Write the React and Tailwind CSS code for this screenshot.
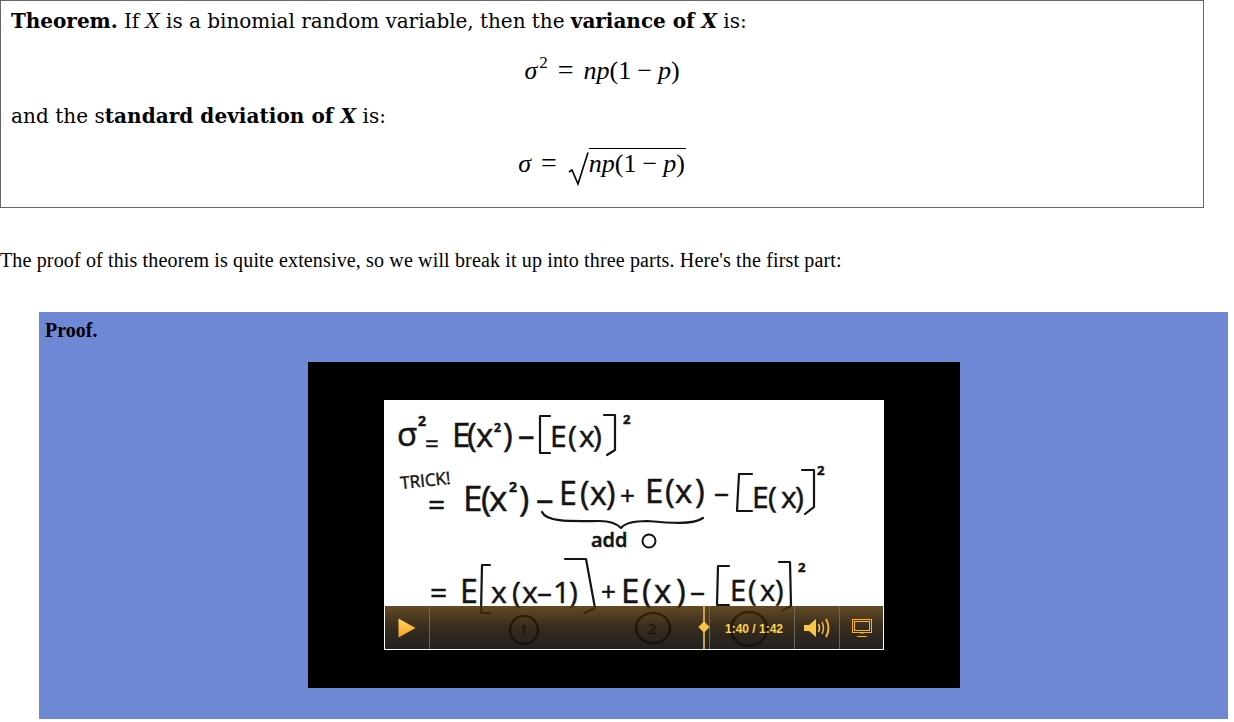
const handFont = { fontFamily: "'Open Sans', sans-serif" };

function Line({ x, y, size = 32, children, fill = "#141414", thick = 0.5, ...rest }) {
  return (
    <text x={x} y={y} fontSize={size} fill={fill} stroke={fill} strokeWidth={thick} style={handFont} {...rest}>
      {children}
    </text>
  );
}

const bracket = {
  fill: "none",
  stroke: "#141414",
  strokeWidth: 2.2,
  strokeLinecap: "round",
  strokeLinejoin: "round",
};

function Board() {
  return (
    <svg viewBox="0 0 498 248" className="block w-full h-full bg-white">
      {/* first line */}
      <Line x="12" y="45" size="33">σ</Line>
      <Line x="33" y="25" size="14" fontWeight="700">2</Line>
      <Line x="40" y="51" size="24">=</Line>
      <Line x="67 82 91" y="46" size="33">E(x</Line>
      <Line x="109" y="31" size="12" fontWeight="700">2</Line>
      <Line x="118 133" y="46" size="33">)–</Line>
      <Line x="165 183 194 208" y="46" size="30">E(x)</Line>
      <Line x="238" y="23" size="13" fontWeight="700">2</Line>
      <path d="M165 15H155V52H165M219 14H230V49L222 54" {...bracket} />

      {/* second line */}
      <Line x="16" y="88" size="17" transform="rotate(-6 16 88)">TRICK!</Line>
      <Line x="43" y="114" size="30">=</Line>
      <Line x="78 96 104" y="110" size="35">E(x</Line>
      <Line x="124" y="91" size="14" fontWeight="700">2</Line>
      <Line x="134 151" y="110" size="35">)–</Line>
      <Line x="174 195 205 221" y="104" size="32">E(x)</Line>
      <Line x="235" y="104" size="26">+</Line>
      <Line x="260 280 290 310" y="102" size="33">E(x)</Line>
      <Line x="329" y="102" size="30">–</Line>
      <Line x="367 383 396 410" y="107" size="30">E(x)</Line>
      <Line x="432" y="74" size="13" fontWeight="700">2</Line>
      <path d="M367 73H354L352 110H367M417 69H429L429 106L420 113" {...bracket} />
      <path d="M157 111C162 122 190 120 215 120C228 120 233 124 236 127C240 122 248 120 262 120C285 122 308 124 318 117" {...bracket} />
      <Line x="206" y="146" size="20" fontWeight="600">add</Line>
      <circle cx="264" cy="140" r="6.5" fill="none" stroke="#141414" strokeWidth="2" />

      {/* third line */}
      <Line x="45" y="202" size="30">=</Line>
      <Line x="75" y="202" size="32">E</Line>
      <Line x="106 127 137 152 168 184" y="202" size="30">x(x–1)</Line>
      <path d="M105 164H97L96 212H105M180 158H201L210 207L200 212" {...bracket} />
      <Line x="216" y="200" size="26">+</Line>
      <Line x="236 257 269 291" y="202" size="33">E(x)</Line>
      <Line x="305" y="201" size="30">–</Line>
      <Line x="345 363 375 390" y="200" size="29">E(x)</Line>
      <Line x="413" y="171" size="13" fontWeight="700">2</Line>
      <path d="M344 165H333L332 204H344M394 161H405L406 205L398 209" {...bracket} />

      {/* circled numbers under the control bar */}
      <circle cx="139" cy="229" r="14" fill="none" stroke="#000" strokeWidth="2.5" />
      <Line x="135" y="234" size="14" fill="#000">1</Line>
      <ellipse cx="268" cy="227" rx="17" ry="15" fill="none" stroke="#000" strokeWidth="2.5" />
      <Line x="263" y="233" size="15" fill="#000">2</Line>
      <ellipse cx="364" cy="228" rx="18" ry="17" fill="none" stroke="#000" strokeWidth="2.5" />
    </svg>
  );
}

function PlayerBar() {
  return (
    <div className="absolute left-0 right-0 bottom-0 h-[43px] flex bg-gradient-to-b from-[rgba(76,48,2,0.87)] via-[rgba(34,22,5,0.9)] to-[rgba(20,20,20,0.95)]">
      <div className="w-[45px] shrink-0 border-r border-[#6b665c] flex items-center justify-center">
        <svg width="18" height="20" viewBox="0 0 18 20">
          <defs>
            <linearGradient id="playFill" x1="0" y1="0" x2="0" y2="1">
              <stop offset="0" stopColor="#ffd766" />
              <stop offset="1" stopColor="#f79f1c" />
            </linearGradient>
          </defs>
          <path d="M0.5 0.5L17.5 10L0.5 19.5Z" fill="url(#playFill)" />
        </svg>
      </div>
      <div className="flex-1 relative border-r border-[#6b665c]">
        <div className="absolute top-0 bottom-0 right-[4px] w-[2px] bg-[#c9a14e]" />
        <div className="absolute top-[17px] right-[1px] w-[8px] h-[8px] rotate-45 bg-[#f6c344]" />
      </div>
      <div className="w-[85px] shrink-0 border-r border-[#6b665c] flex items-center justify-center pl-[4px] pt-[2px] font-['Liberation_Sans',sans-serif] font-bold text-[12px] text-[#ffd24d]">
        1:40 / 1:42
      </div>
      <div className="w-[45px] shrink-0 border-r border-[#6b665c] flex items-center justify-center">
        <svg width="28" height="20" viewBox="0 0 28 20" fill="none">
          <path d="M1 7H6L13 1V19L6 13H1Z" fill="#f8c64c" />
          <path d="M15.5 6Q17.5 10 15.5 14" stroke="#f8c64c" strokeWidth="1.5" />
          <path d="M19 4Q22 10 19 16" stroke="#f3b53c" strokeWidth="1.5" />
          <path d="M23 1Q28 10 23 19" stroke="#f3b53c" strokeWidth="2" />
        </svg>
      </div>
      <div className="w-[43px] shrink-0 flex items-center justify-center pl-[2px]">
        <svg width="21" height="18" viewBox="0 0 21 18" fill="none">
          <rect x="0.5" y="0.5" width="19" height="13" stroke="#ffb31a" />
          <rect x="2.5" y="2.5" width="15" height="9" stroke="#ffb31a" />
          <path d="M8 14.5H12" stroke="#7a6a45" />
          <path d="M5 17.5H15" stroke="#ffb31a" />
        </svg>
      </div>
    </div>
  );
}

export default function App() {
  return (
    <div className="h-screen overflow-hidden bg-white text-black">
      <div className="w-[1204px] h-[208px] border border-[#666] pl-[10px] pt-[6px] font-['DejaVu_Serif',serif] text-[20px] leading-[28px]">
        <p className="tracking-[-0.03px]">
          <b>Theorem.</b> If <i>X</i> is a binomial random variable, then the{" "}
          <b>variance of <i>X</i></b> is:
        </p>
        <div className="mt-[18px] h-[36px] ml-[-10px] flex justify-center items-center font-['Liberation_Serif',serif] text-[26px] leading-[36px] whitespace-pre">
          <span>
            <i>σ</i><sup className="text-[17px] top-[-11px] ml-[2px]">2</sup><span className="mx-[10px] text-[28px] leading-none">=</span><i>np</i>(1<span className="mx-[6px] leading-none">−</span><i>p</i>)
          </span>
        </div>
        <p className="mt-[13px] tracking-[0.05px]">
          and the s<b>tandard deviation of <i>X</i></b> is:
        </p>
        <div className="mt-[18px] ml-[-10px] flex justify-center items-end font-['Liberation_Serif',serif] text-[26px] leading-[30px] whitespace-pre">
          <span><i>σ</i><span className="mx-[10px] text-[28px] leading-none">=</span></span>
          <svg width="21" height="34" viewBox="0 0 21 34" fill="none" className="mb-[-7px] ml-[1px]">
            <path d="M1 20L4 18L10 32L20 0.5" stroke="#000" strokeWidth="1.6" />
          </svg>
          <span className="border-t border-black pr-[1px]">
            <i>np</i>(1<span className="mx-[6px] leading-none">−</span><i>p</i>)
          </span>
        </div>
      </div>

      <p className="mt-[41px] font-['Liberation_Serif',serif] text-[20px] tracking-[0.147px] leading-[23px]">
        The proof of this theorem is quite extensive, so we will break it up into three parts. Here's the first part:
      </p>

      <div className="mt-[40px] ml-[39px] w-[1189px] h-[407px] bg-[#6e88d6] pt-[7px]">
        <p className="pl-[6px] font-['Liberation_Serif',serif] font-bold text-[20px] leading-[23px]">Proof.</p>
        <div className="mt-[20px] ml-[269px] w-[652px] h-[326px] bg-black pt-[38px] pl-[76px]">
          <div className="relative w-[500px] h-[250px] border border-white overflow-hidden">
            <Board />
            <PlayerBar />
          </div>
        </div>
      </div>
    </div>
  );
}
